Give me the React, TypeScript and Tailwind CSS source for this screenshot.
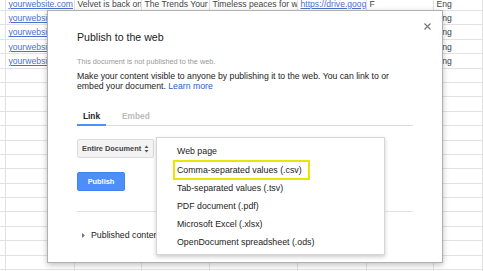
const cols = ['w-[6px]', 'w-[69px]', 'w-[67px]', 'w-[68px]', 'w-[88px]', 'w-[69px]', 'w-[67px]', 'flex-1']

const sheet: { text: string; link?: boolean }[][] = [
  [
    { text: '' },
    { text: 'yourwebsite.com', link: true },
    { text: 'Velvet is back on Spring' },
    { text: 'The Trends Your Closet' },
    { text: 'Timeless peaces for work' },
    { text: 'https://drive.google.com', link: true },
    { text: 'F' },
    { text: 'Eng' },
  ],
  ...Array.from({ length: 4 }, () => [
    { text: '' },
    { text: 'yourwebsite.com', link: true },
    { text: '' },
    { text: '' },
    { text: '' },
    { text: '' },
    { text: '' },
    { text: 'Eng' },
  ]),
  ...Array.from({ length: 15 }, () => cols.map(() => ({ text: '' }))),
]

const formats = [
  'Web page',
  'Comma-separated values (.csv)',
  'Tab-separated values (.tsv)',
  'PDF document (.pdf)',
  'Microsoft Excel (.xlsx)',
  'OpenDocument spreadsheet (.ods)',
]

export default function App() {
  return (
    <div className="relative w-[483px] h-[271px] overflow-hidden bg-white font-['Liberation_Sans',Arial,sans-serif]">
      {/* spreadsheet behind */}
      <div className="flex flex-col mt-[-3.4px]">
        {sheet.map((row, r) => (
          <div key={r} className="flex h-[14.4px] border-b border-[#e2e2e2] shrink-0">
            {row.map((c, i) => (
              <div
                key={i}
                className={`${cols[i]} shrink-0 border-r border-[#e2e2e2] overflow-hidden whitespace-nowrap px-[2.5px] pt-[1px] text-[8.6px] leading-[13px] ${c.link ? 'text-[#4a72cc] underline' : 'text-[#444]'}`}
              >
                {c.text}
              </div>
            ))}
          </div>
        ))}
      </div>

      {/* dialog */}
      <div className="absolute left-[47px] top-[10px] w-[396px] h-[253px] bg-white border border-[#b0b0b0] shadow-[0_2px_6px_rgba(0,0,0,0.25)] px-[29px] pt-[20px]">
        <button className="absolute right-[11px] top-[12px] w-[7px] h-[7px]">
          <svg viewBox="0 0 7 7" className="w-[7px] h-[7px] block">
            <path d="M0.5 0.5 L6.5 6.5 M6.5 0.5 L0.5 6.5" stroke="#777" strokeWidth="1.2" />
          </svg>
        </button>

        <div className="text-[10.6px] leading-[13px] text-[#222]">Publish to the web</div>
        <div className="mt-[13px] text-[7.3px] leading-[9px] text-[#999]">This document is not published to the web.</div>
        <div className="mt-[4.5px] text-[8.7px] leading-[10px] text-[#222]">
          Make your content visible to anyone by publishing it to the web. You can link to or
          <br />
          embed your document. <span className="text-[#1a5dd6]">Learn more</span>
        </div>

        <div className="mt-[20.5px] flex gap-[10px] border-b border-[#dedede]">
          <div className="-mb-px px-[6px] pb-[3px] border-b-2 border-[#4d90fe] text-[8.3px] leading-[10px] font-bold text-[#222]">Link</div>
          <div className="-mb-px px-[6px] pb-[3px] text-[8.3px] leading-[10px] font-bold text-[#bbb]">Embed</div>
        </div>

        <div className="mt-[13px] w-[77px] h-[19px] flex items-center justify-between pl-[4px] pr-[4px] bg-[#f3f3f3] border border-[#dcdcdc] rounded-[2px] text-[7.4px] font-bold text-[#444]">
          <span>Entire Document</span>
          <svg viewBox="0 0 5 8" className="w-[5px] h-[8px]">
            <path d="M2.5 0.5 L4.5 3 L0.5 3 Z M2.5 7.5 L4.5 5 L0.5 5 Z" fill="#555" />
          </svg>
        </div>

        <div className="mt-[14px] w-[48px] h-[19px] flex items-center justify-center bg-[#4d8ff9] border border-[#4383f0] rounded-[2px] text-[7.4px] font-bold text-white">
          Publish
        </div>

        <div className="mt-[20px] border-t border-[#e3e3e3]" />

        <div className="mt-[18px] flex items-center gap-[6px] text-[8.8px] leading-[11px] text-[#222]">
          <svg viewBox="0 0 3 5" className="ml-[5px] w-[3px] h-[5px]">
            <path d="M0 0 L3 2.5 L0 5 Z" fill="#777" />
          </svg>
          <span>Published content &amp; settings</span>
        </div>
      </div>

      {/* format menu */}
      <div className="absolute left-[156px] top-[137px] w-[229px] h-[118px] bg-white border border-[#d6d6d6] shadow-[0_2px_4px_rgba(0,0,0,0.2)] pt-[5px]">
        {formats.map((f, i) => (
          <div key={f} className="h-[18.1px] flex items-center pl-[20px] text-[8.8px] text-[#222] whitespace-nowrap">
            {i === 1 ? (
              <span className="-ml-[4px] h-[19.5px] flex items-center pl-[2px] pr-[6px] border-2 border-[#e6e600]">{f}</span>
            ) : (
              f
            )}
          </div>
        ))}
      </div>
    </div>
  )
}
